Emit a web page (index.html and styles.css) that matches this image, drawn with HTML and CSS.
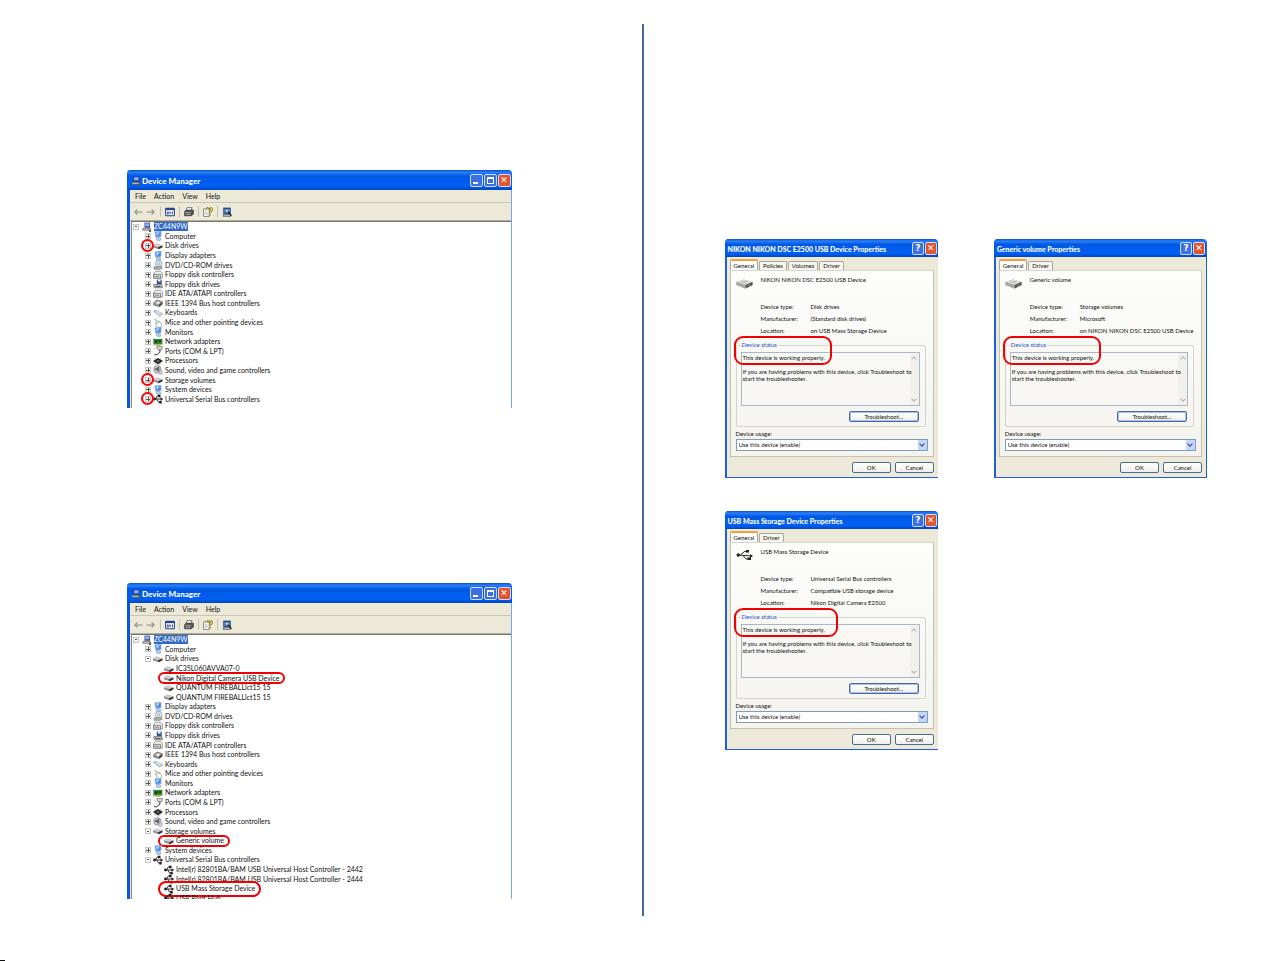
FILE: index.html
```html
<!DOCTYPE html>
<html lang="en">
<head>
<meta charset="utf-8">
<title>Checking the device drivers</title>
<link rel="stylesheet" href="styles.css">
</head>
<body>
<svg class="sprite" aria-hidden="true">
  <symbol id="pc" viewBox="0 0 16 16"><path d="M4 1h9v8H4z" fill="#29377a"/><path d="M5 2h7v5H5z" fill="#8fb0e8"/><path d="M2 10h11l1 3H1z" fill="#d8d8d8" stroke="#333"/><path d="M11 12l4 2-1 2h-3z" fill="#555"/></symbol>
  <symbol id="mon" viewBox="0 0 16 16"><path d="M3 1l10-1v9l-9 1z" fill="#4a8be0" stroke="#a9c4ea"/><path d="M5 2l6 0-5 6z" fill="#a6d4ff"/><path d="M6 10h5l2 4-4 2-4-2z" fill="#b9cbe0" stroke="#6d88ad" stroke-width=".7"/></symbol>
  <symbol id="disk" viewBox="0 0 16 16"><path d="M0 7l6-3 9 3v3l-6 3-9-3z" fill="#8b8b8b"/><path d="M0 7l6-3 9 3-6 3z" fill="#cfcfcf"/><path d="M8 10l7-3v3l-6 3z" fill="#333"/></symbol>
  <symbol id="cd" viewBox="0 0 16 16"><circle cx="9" cy="6" r="5.4" fill="#dce6f2" stroke="#7c8aa0"/><circle cx="9" cy="6" r="1.6" fill="#fff" stroke="#7c8aa0"/><path d="M1 11l12-1 2 3-4 2H2z" fill="#aaa" stroke="#666" stroke-width=".7"/></symbol>
  <symbol id="ctl" viewBox="0 0 16 16"><path d="M4 2h8l3 3v8H1V6z" fill="#eee" stroke="#666"/><path d="M1 7h11v6H1z" fill="#ddd" stroke="#555"/><path d="M3 10h7" stroke="#555"/></symbol>
  <symbol id="flop" viewBox="0 0 16 16"><path d="M6 1h8v8H6z" fill="#3652a8"/><path d="M8 1h4v3H8z" fill="#fff"/><path d="M1 9l12-1 2 3v3H2z" fill="#bbb" stroke="#555"/><path d="M4 12h8" stroke="#222"/></symbol>
  <symbol id="fw" viewBox="0 0 16 16"><path d="M1 8l5-5 9 3v4l-5 4-9-3z" fill="#999" stroke="#555"/><path d="M4 8l4-3 4 2-3 3z" fill="#eee"/><path d="M10 10l4-3v3l-4 3z" fill="#333"/></symbol>
  <symbol id="key" viewBox="0 0 16 16"><path d="M1 5l4-1 10 5-4 4z" fill="#bcd0e6" stroke="#6d7f98"/><path d="M4 6l8 5M6 5l7 4" stroke="#fff"/></symbol>
  <symbol id="mouse" viewBox="0 0 16 16"><path d="M2 2c3 0 3 3 5 3" fill="none" stroke="#666"/><path d="M5 6c3-3 9 1 9 6 0 4-6 4-8 1-1-2-3-5-1-7z" fill="#fff" stroke="#777"/><path d="M5 9l6-3" stroke="#888"/></symbol>
  <symbol id="net" viewBox="0 0 16 16"><path d="M1 3h14v9H1z" fill="#2d8a35"/><path d="M3 5h4v4H3zM9 5h4v3H9z" fill="#0f4515"/><path d="M4 12h8v2H4z" fill="#c2a436"/><path d="M0 2v12" stroke="#333"/></symbol>
  <symbol id="port" viewBox="0 0 16 16"><path d="M6 1h9l-1 5H8z" fill="#ddd" stroke="#555"/><path d="M11 6v4l-5 4H2" fill="none" stroke="#333" stroke-width="1.6"/><path d="M2 4l3 1" stroke="#999"/></symbol>
  <symbol id="cpu" viewBox="0 0 16 16"><path d="M0 8l8-5 8 5-8 5z" fill="#222"/><path d="M5 8l3-2 3 2-3 2z" fill="#777"/><path d="M2 11l6 4 6-4M2 5l3-2M11 3l3 2" fill="none" stroke="#555" stroke-dasharray="1 1"/></symbol>
  <symbol id="snd" viewBox="0 0 16 16"><circle cx="7" cy="7" r="6" fill="#ccc" stroke="#777"/><path d="M5 5l5-3v9l-5-3H3V5z" fill="#666"/><circle cx="12" cy="12" r="3" fill="#c9d6e8" stroke="#7c8aa0"/></symbol>
  <symbol id="usb" viewBox="0 0 16 16"><g fill="none" stroke="#222" stroke-width="1.5"><path d="M1 8h14M4 8l3-5h3M6 8l3 5h3"/></g><circle cx="2.5" cy="8" r="2.3" fill="#222"/><path d="M8 1h4v4H8zM10 11h4v4h-4zM12 5l4 3-4 3z" fill="#222"/></symbol>
  <symbol id="back" viewBox="0 0 16 16"><path d="M15 8H3M7 4L3 8l4 4" fill="none" stroke="#9a9a90" stroke-width="2"/></symbol>
  <symbol id="fwd" viewBox="0 0 16 16"><path d="M1 8h12M9 4l4 4-4 4" fill="none" stroke="#9a9a90" stroke-width="2"/></symbol>
  <symbol id="props" viewBox="0 0 16 16"><path d="M1 2h14v12H1z" fill="#fff" stroke="#1f3c8c" stroke-width="1.6"/><path d="M1 2h14v3H1z" fill="#1f3c8c"/><path d="M3 7h3v5H3zM11 7h2v5h-2z" fill="#4a67b4"/><path d="M7 9h3M8 7v5" stroke="#223"/></symbol>
  <symbol id="print" viewBox="0 0 16 16"><path d="M5 1h8l-2 5H3z" fill="#fff" stroke="#333"/><path d="M1 7l3-2h11v6l-3 3H1z" fill="#555" stroke="#222"/><path d="M2 9h9" stroke="#ddd"/><path d="M3 12h7" stroke="#ccc"/></symbol>
  <symbol id="help" viewBox="0 0 16 16"><path d="M1 3h9v12H1z" fill="#fff" stroke="#444"/><path d="M3 8h4M3 11h5" stroke="#777"/><path d="M7 4c0-4 7-4 7 0 0 3-3 2-3 5M11 11v2" fill="none" stroke="#333" stroke-width="3.4"/><path d="M7 4c0-4 7-4 7 0 0 3-3 2-3 5M11 11v2" fill="none" stroke="#f4e22e" stroke-width="2"/></symbol>
  <symbol id="scan" viewBox="0 0 16 16"><path d="M2 1h12v10H2z" fill="#1d3f8f"/><path d="M4 3h8v6H4z" fill="#7fc1ee"/><path d="M2 12h12v3H2z" fill="#bbb" stroke="#445"/><circle cx="8" cy="6" r="2.5" fill="#dff" stroke="#123"/><path d="M10 8l5 6" stroke="#123" stroke-width="2"/></symbol>
  <symbol id="drive" viewBox="0 0 34 28"><path d="M1 12l14-5 18 5v6L19 25 1 18z" fill="#8e8e8e"/><path d="M1 12l14-5 18 5-14 6z" fill="#e2e2e2"/><path d="M7 12l9-3 10 3-8 3z" fill="#c4c4c4"/><path d="M19 18l14-6v6l-14 7z" fill="#555"/><path d="M1 12l18 6v7L1 18z" fill="#a9a9a9"/><path d="M25 19l3-1" stroke="#5d5" stroke-width="2"/></symbol>
  <symbol id="usbbig" viewBox="0 0 34 28"><g fill="none" stroke="#222" stroke-width="2"><path d="M4 14l26 2M9 14l8-7h6M14 15l6 7h5"/></g><circle cx="4.500" cy="14" r="3.500" fill="#222"/><path d="M20 4h6v5h-6zM23 19h7v5h-7zM28 12l6 4-6 4z" fill="#222"/></symbol>
</svg>

<main class="spread">
  <section class="page page-left">
    <article class="window">
      <header class="titlebar"><svg class="icon"><use href="#pc"/></svg><h2>Device Manager</h2><button class="ctl" aria-label="Minimize"><i class="min"></i></button><button class="ctl" aria-label="Maximize"><i class="max"></i></button><button class="ctl close" aria-label="Close">✕</button></header>
      <nav class="menubar"><button>File</button><button>Action</button><button>View</button><button>Help</button></nav>
      <div class="toolbar"><button aria-label="Back"><svg class="icon"><use href="#back"/></svg></button><button aria-label="Forward"><svg class="icon"><use href="#fwd"/></svg></button><hr><button aria-label="Properties"><svg class="icon"><use href="#props"/></svg></button><hr><button aria-label="Print"><svg class="icon"><use href="#print"/></svg></button><hr><button aria-label="Help"><svg class="icon"><use href="#help"/></svg></button><hr><button aria-label="Scan"><svg class="icon"><use href="#scan"/></svg></button></div>
      <ul class="tree tree-closed">
        <li class="root"><button class="box open" aria-label="Collapse"></button><svg class="icon"><use href="#pc"/></svg><span class="selected">ZC44N9W</span></li>
        <li><button class="box" aria-label="Expand"></button><svg class="icon"><use href="#mon"/></svg><span>Computer</span></li>
        <li class="ringed"><button class="box" aria-label="Expand"></button><svg class="icon"><use href="#disk"/></svg><span>Disk drives</span></li>
        <li><button class="box" aria-label="Expand"></button><svg class="icon"><use href="#mon"/></svg><span>Display adapters</span></li>
        <li><button class="box" aria-label="Expand"></button><svg class="icon"><use href="#cd"/></svg><span>DVD/CD-ROM drives</span></li>
        <li><button class="box" aria-label="Expand"></button><svg class="icon"><use href="#ctl"/></svg><span>Floppy disk controllers</span></li>
        <li><button class="box" aria-label="Expand"></button><svg class="icon"><use href="#flop"/></svg><span>Floppy disk drives</span></li>
        <li><button class="box" aria-label="Expand"></button><svg class="icon"><use href="#ctl"/></svg><span>IDE ATA/ATAPI controllers</span></li>
        <li><button class="box" aria-label="Expand"></button><svg class="icon"><use href="#fw"/></svg><span>IEEE 1394 Bus host controllers</span></li>
        <li><button class="box" aria-label="Expand"></button><svg class="icon"><use href="#key"/></svg><span>Keyboards</span></li>
        <li><button class="box" aria-label="Expand"></button><svg class="icon"><use href="#mouse"/></svg><span>Mice and other pointing devices</span></li>
        <li><button class="box" aria-label="Expand"></button><svg class="icon"><use href="#mon"/></svg><span>Monitors</span></li>
        <li><button class="box" aria-label="Expand"></button><svg class="icon"><use href="#net"/></svg><span>Network adapters</span></li>
        <li><button class="box" aria-label="Expand"></button><svg class="icon"><use href="#port"/></svg><span>Ports (COM &amp; LPT)</span></li>
        <li><button class="box" aria-label="Expand"></button><svg class="icon"><use href="#cpu"/></svg><span>Processors</span></li>
        <li><button class="box" aria-label="Expand"></button><svg class="icon"><use href="#snd"/></svg><span>Sound, video and game controllers</span></li>
        <li class="ringed"><button class="box" aria-label="Expand"></button><svg class="icon"><use href="#disk"/></svg><span>Storage volumes</span></li>
        <li><button class="box" aria-label="Expand"></button><svg class="icon"><use href="#mon"/></svg><span>System devices</span></li>
        <li class="ringed"><button class="box" aria-label="Expand"></button><svg class="icon"><use href="#usb"/></svg><span>Universal Serial Bus controllers</span></li>
      </ul>
    </article>

    <article class="window">
      <header class="titlebar"><svg class="icon"><use href="#pc"/></svg><h2>Device Manager</h2><button class="ctl" aria-label="Minimize"><i class="min"></i></button><button class="ctl" aria-label="Maximize"><i class="max"></i></button><button class="ctl close" aria-label="Close">✕</button></header>
      <nav class="menubar"><button>File</button><button>Action</button><button>View</button><button>Help</button></nav>
      <div class="toolbar"><button aria-label="Back"><svg class="icon"><use href="#back"/></svg></button><button aria-label="Forward"><svg class="icon"><use href="#fwd"/></svg></button><hr><button aria-label="Properties"><svg class="icon"><use href="#props"/></svg></button><hr><button aria-label="Print"><svg class="icon"><use href="#print"/></svg></button><hr><button aria-label="Help"><svg class="icon"><use href="#help"/></svg></button><hr><button aria-label="Scan"><svg class="icon"><use href="#scan"/></svg></button></div>
      <div class="crop">
      <ul class="tree tree-open">
        <li class="root"><button class="box open" aria-label="Collapse"></button><svg class="icon"><use href="#pc"/></svg><span class="selected">ZC44N9W</span></li>
        <li><button class="box" aria-label="Expand"></button><svg class="icon"><use href="#mon"/></svg><span>Computer</span></li>
        <li><button class="box open" aria-label="Collapse"></button><svg class="icon"><use href="#disk"/></svg><span>Disk drives</span></li>
        <li class="leaf"><svg class="icon"><use href="#disk"/></svg><span>IC35L060AVVA07-0</span></li>
        <li class="leaf"><div class="marked"><svg class="icon"><use href="#disk"/></svg><span>Nikon Digital Camera USB Device</span></div></li>
        <li class="leaf"><svg class="icon"><use href="#disk"/></svg><span>QUANTUM FIREBALLlct15 15</span></li>
        <li class="leaf"><svg class="icon"><use href="#disk"/></svg><span>QUANTUM FIREBALLlct15 15</span></li>
        <li><button class="box" aria-label="Expand"></button><svg class="icon"><use href="#mon"/></svg><span>Display adapters</span></li>
        <li><button class="box" aria-label="Expand"></button><svg class="icon"><use href="#cd"/></svg><span>DVD/CD-ROM drives</span></li>
        <li><button class="box" aria-label="Expand"></button><svg class="icon"><use href="#ctl"/></svg><span>Floppy disk controllers</span></li>
        <li><button class="box" aria-label="Expand"></button><svg class="icon"><use href="#flop"/></svg><span>Floppy disk drives</span></li>
        <li><button class="box" aria-label="Expand"></button><svg class="icon"><use href="#ctl"/></svg><span>IDE ATA/ATAPI controllers</span></li>
        <li><button class="box" aria-label="Expand"></button><svg class="icon"><use href="#fw"/></svg><span>IEEE 1394 Bus host controllers</span></li>
        <li><button class="box" aria-label="Expand"></button><svg class="icon"><use href="#key"/></svg><span>Keyboards</span></li>
        <li><button class="box" aria-label="Expand"></button><svg class="icon"><use href="#mouse"/></svg><span>Mice and other pointing devices</span></li>
        <li><button class="box" aria-label="Expand"></button><svg class="icon"><use href="#mon"/></svg><span>Monitors</span></li>
        <li><button class="box" aria-label="Expand"></button><svg class="icon"><use href="#net"/></svg><span>Network adapters</span></li>
        <li><button class="box" aria-label="Expand"></button><svg class="icon"><use href="#port"/></svg><span>Ports (COM &amp; LPT)</span></li>
        <li><button class="box" aria-label="Expand"></button><svg class="icon"><use href="#cpu"/></svg><span>Processors</span></li>
        <li><button class="box" aria-label="Expand"></button><svg class="icon"><use href="#snd"/></svg><span>Sound, video and game controllers</span></li>
        <li><button class="box open" aria-label="Collapse"></button><svg class="icon"><use href="#disk"/></svg><span>Storage volumes</span></li>
        <li class="leaf"><div class="marked"><svg class="icon"><use href="#disk"/></svg><span>Generic volume</span></div></li>
        <li><button class="box" aria-label="Expand"></button><svg class="icon"><use href="#mon"/></svg><span>System devices</span></li>
        <li><button class="box open" aria-label="Collapse"></button><svg class="icon"><use href="#usb"/></svg><span>Universal Serial Bus controllers</span></li>
        <li class="leaf"><svg class="icon"><use href="#usb"/></svg><span>Intel(r) 82801BA/BAM USB Universal Host Controller - 2442</span></li>
        <li class="leaf"><svg class="icon"><use href="#usb"/></svg><span>Intel(r) 82801BA/BAM USB Universal Host Controller - 2444</span></li>
        <li class="leaf"><div class="marked tall"><svg class="icon"><use href="#usb"/></svg><span>USB Mass Storage Device</span></div></li>
        <li class="leaf"><svg class="icon"><use href="#usb"/></svg><span>USB Root Hub</span></li>
      </ul>
      </div>
    </article>
  </section>

  <section class="page page-right">
    <article class="dialog">
      <header class="titlebar"><h2>NIKON NIKON DSC E2500 USB Device Properties</h2><button class="ctl" aria-label="Help">?</button><button class="ctl close" aria-label="Close">✕</button></header>
      <div class="dialog-body">
        <nav class="tabs"><button class="tab active">General</button><button class="tab">Policies</button><button class="tab">Volumes</button><button class="tab">Driver</button></nav>
        <div class="panel">
          <div class="device"><svg class="device-icon"><use href="#drive"/></svg><span>NIKON NIKON DSC E2500 USB Device</span></div>
          <dl class="facts"><dt>Device type:</dt><dd>Disk drives</dd><dt>Manufacturer:</dt><dd>(Standard disk drives)</dd><dt>Location:</dt><dd>on USB Mass Storage Device</dd></dl>
          <fieldset class="status"><legend>Device status</legend>
            <div class="message"><textarea readonly aria-label="Device status">This device is working properly.

If you are having problems with this device, click Troubleshoot to
start the troubleshooter.</textarea><div class="scroll"><i></i><i class="down"></i></div></div>
            <button class="push default">Troubleshoot...</button>
            <span class="ring"></span>
          </fieldset>
          <label class="usage-label" for="usage1">Device usage:</label>
          <div class="picker"><select id="usage1"><option>Use this device (enable)</option></select></div>
        </div>
        <footer class="actions"><button class="push">OK</button><button class="push">Cancel</button></footer>
      </div>
    </article>

    <article class="dialog framed">
      <header class="titlebar"><h2>Generic volume Properties</h2><button class="ctl" aria-label="Help">?</button><button class="ctl close" aria-label="Close">✕</button></header>
      <div class="dialog-body">
        <nav class="tabs"><button class="tab active">General</button><button class="tab">Driver</button></nav>
        <div class="panel">
          <div class="device"><svg class="device-icon"><use href="#drive"/></svg><span>Generic volume</span></div>
          <dl class="facts"><dt>Device type:</dt><dd>Storage volumes</dd><dt>Manufacturer:</dt><dd>Microsoft</dd><dt>Location:</dt><dd>on NIKON NIKON DSC E2500 USB Device</dd></dl>
          <fieldset class="status"><legend>Device status</legend>
            <div class="message"><textarea readonly aria-label="Device status">This device is working properly.

If you are having problems with this device, click Troubleshoot to
start the troubleshooter.</textarea><div class="scroll"><i></i><i class="down"></i></div></div>
            <button class="push default">Troubleshoot...</button>
            <span class="ring"></span>
          </fieldset>
          <label class="usage-label" for="usage2">Device usage:</label>
          <div class="picker"><select id="usage2"><option>Use this device (enable)</option></select></div>
        </div>
        <footer class="actions"><button class="push">OK</button><button class="push">Cancel</button></footer>
      </div>
    </article>

    <article class="dialog">
      <header class="titlebar"><h2>USB Mass Storage Device Properties</h2><button class="ctl" aria-label="Help">?</button><button class="ctl close" aria-label="Close">✕</button></header>
      <div class="dialog-body">
        <nav class="tabs"><button class="tab active">General</button><button class="tab">Driver</button></nav>
        <div class="panel">
          <div class="device"><svg class="device-icon"><use href="#usbbig"/></svg><span>USB Mass Storage Device</span></div>
          <dl class="facts"><dt>Device type:</dt><dd>Universal Serial Bus controllers</dd><dt>Manufacturer:</dt><dd>Compatible USB storage device</dd><dt>Location:</dt><dd>Nikon Digital Camera E2500</dd></dl>
          <fieldset class="status"><legend>Device status</legend>
            <div class="message"><textarea readonly aria-label="Device status">This device is working properly.

If you are having problems with this device, click Troubleshoot to
start the troubleshooter.</textarea><div class="scroll"><i></i><i class="down"></i></div></div>
            <button class="push default">Troubleshoot...</button>
            <span class="ring wide"></span>
          </fieldset>
          <label class="usage-label" for="usage3">Device usage:</label>
          <div class="picker"><select id="usage3"><option>Use this device (enable)</option></select></div>
        </div>
        <footer class="actions"><button class="push">OK</button><button class="push">Cancel</button></footer>
      </div>
    </article>
  </section>
</main>
<span class="corner-mark"></span>
</body>
</html>
```
FILE: styles.css
```css
*, *::before, *::after { box-sizing: border-box; }
body { margin: 0; background: #fff; color: #111; font: 7px/9px Lato, "Liberation Sans", sans-serif; }
button, select, textarea { font: inherit; color: inherit; margin: 0; padding: 0; border: 0; background: none; border-radius: 0; }
h2, ul, dl, dd { margin: 0; padding: 0; }
.sprite { position: absolute; width: 0; height: 0; }
.icon { width: 10px; height: 10px; flex: none; display: block; }

.spread { display: grid; grid-template-columns: 1fr 1fr; min-height: 100vh; padding: 24px 0 45px; }
.page-left { padding: 146px 130px 0 127px; display: flex; flex-direction: column; gap: 175px; }
.page-right { border-left: 2px solid #4a65a5; padding: 215px 76px 0 81px; display: grid; grid-template-columns: 1fr 1fr; gap: 33px 56px; align-content: start; }

/* title bars */
.titlebar { display: flex; align-items: center; gap: 1px; height: 20px; padding: 1px 1px 0 4px; color: #fff; background: linear-gradient(#0a4fd0, #2a80f8 12%, #0058e4 30%, #0060f4 80%, #0046c0); border-radius: 4px 4px 0 0; }
.titlebar h2 { flex: 1; min-width: 0; white-space: nowrap; font: 900 8px/10px Lato, sans-serif; }
.ctl { width: 13px; height: 13px; flex: none; display: grid; place-items: center; border: 1px solid #cfdcf8; border-radius: 2px; background: #3c6fe4; color: #fff; font: bold 9px/11px "DejaVu Sans", sans-serif; }
.close { background: #e2552c; }
.min { width: 5px; height: 2px; margin: 5px 2px 0 0; background: #fff; }
.max { width: 7px; height: 7px; border: 1px solid #fff; border-top-width: 2px; }

/* device manager */
.window { background: #ece9d8; border-left: 3px solid #0a56e0; border-right: 1px solid #7aa5f0; border-radius: 4px 4px 0 0; }
.window .titlebar { margin: 0 -1px 0 -3px; }
.menubar { display: flex; gap: 8px; height: 13px; padding-left: 5px; border-bottom: 1px solid #c9c6b6; }
.toolbar { display: flex; align-items: center; gap: 3px; height: 18px; padding-left: 3px; border-bottom: 1px solid #b0ad9f; }
.toolbar hr { width: 1px; height: 11px; margin: 0 1px; border: 0; background: #c5c2b2; }
.tree { display: grid; grid-auto-rows: 1fr; margin-left: 1px; border-left: 1px solid #8c8a80; border-top: 1px solid #77756c; background: #fff; list-style: none; }
.tree-closed { height: 187px; padding-bottom: 4px; }
.tree-open { height: 269px; }
.crop { height: 265px; overflow: hidden; }
.tree li { position: relative; display: flex; align-items: center; gap: 2px; min-height: 0; padding-left: 13px; white-space: nowrap; }
.tree .root { padding-left: 1px; }
.root .icon { margin-left: 1px; }
.tree .leaf { padding-left: 32px; }
.box { width: 6px; height: 6px; flex: none; border: 1px solid #c4c4c4; background: linear-gradient(#555, #555) center / 4px 1px no-repeat, linear-gradient(#555, #555) center / 1px 4px no-repeat, #f4f2ea; }
.box.open { background: linear-gradient(#555, #555) center / 2px 1px no-repeat, #f8f8f4; }
.selected { background: #316ac5; color: #fff; }
.ringed::after { content: ""; position: absolute; left: 9px; top: -2px; width: 13px; height: 13px; border: 2px solid #f00; border-radius: 50%; }
.marked { position: relative; display: flex; align-items: center; gap: 2px; }
.marked::after { content: ""; position: absolute; inset: -1px -6px -1px -6px; border: 2px solid #f00000; border-radius: 6px; }
.marked.tall::after { inset: -3px -6px -3px -6px; border-radius: 8px; }

/* property sheets */
.dialog { min-width: 0; background: #ece9d8; border-left: 2px solid #1c5fe0; border-bottom: 1px solid #1c5fe0; border-radius: 4px 4px 0 0; font-size: 6px; line-height: 8px; }
.dialog.framed { border-right: 1px solid #1c5fe0; }
.dialog .titlebar { height: 18px; margin-left: -2px; padding-left: 3px; }
.dialog .titlebar h2 { font-size: 7px; }
.dialog .ctl { width: 12px; }
.dialog-body { padding: 2px 4px 4px 3px; }
.tabs { display: flex; align-items: flex-end; gap: 1px; height: 11px; }
.tab { height: 9px; padding: 0 3px; border: 1px solid #a8a798; border-bottom: 0; border-radius: 2px 2px 0 0; background: #f6f5ef; }
.tab.active { height: 11px; border-top: 2px solid #f0a13c; background: #fcfcfb; }
.panel { padding: 5px; border: 1px solid #c2c1b4; border-top-color: #d8d7cc; background: linear-gradient(#fdfdfc, #f4f3ee); }
.device { display: flex; align-items: flex-start; gap: 8px; height: 16px; }
.device-icon { width: 17px; height: 14px; flex: none; }
.facts { display: grid; grid-template-columns: 50px 1fr; grid-auto-rows: 12px; padding: 9px 0 0 25px; white-space: nowrap; line-height: 12px; }
.status { position: relative; display: flex; flex-direction: column; min-width: 0; margin: 4px 2px 3px 0; padding: 3px 5px 4px 4px; border: 1px solid #d5d4c8; border-radius: 2px; }
.status legend { padding: 0 1px; color: #1c50c8; line-height: 8px; }
.message { display: flex; height: 54px; border: 1px solid #a9b7c9; background: linear-gradient(#f1f0ea, #f1f0ea) right / 9px 100% no-repeat; }
.message textarea { flex: 1; min-width: 0; resize: none; overflow: hidden; white-space: pre; line-height: 7px; padding: 1px 0 0 1px; outline: 0; }
.scroll { width: 9px; flex: none; margin-left: -9px; display: flex; flex-direction: column; justify-content: space-between; align-items: center; padding: 4px 0; }
.scroll i, .picker::after { width: 4px; height: 4px; border: solid #b8b8ae; border-width: 1px 0 0 1px; rotate: 45deg; }
.scroll .down { rotate: 225deg; }
.push { height: 11px; border: 1px solid #4a6a9c; border-radius: 2px; background: linear-gradient(#fff, #efeee8); }
.push.default { align-self: flex-end; width: 70px; margin: 5px 1px 0 0; box-shadow: inset 0 0 0 1px #a9c3ee; }
.ring { position: absolute; left: -3px; top: -13px; width: 98px; height: 29px; border: 2px solid #f00000; border-radius: 9px; }
.ring.wide { width: 104px; }
.usage-label { display: block; line-height: 8px; margin-bottom: 1px; }
.picker { position: relative; }
.picker select { display: block; width: 100%; height: 12px; padding-left: 2px; appearance: none; border: 1px solid #7f9db9; background: linear-gradient(#c6d5fb, #c6d5fb) right / 9px 100% no-repeat, #fff; }
.picker::after { content: ""; position: absolute; right: 4px; top: 3px; border-color: #2d4a80; rotate: 225deg; }
.actions { display: flex; justify-content: flex-end; gap: 4px; padding-top: 5px; }
.actions .push { width: 39px; }

.corner-mark { position: fixed; left: 0; bottom: 0; width: 5px; height: 1px; background: #111; }
```
